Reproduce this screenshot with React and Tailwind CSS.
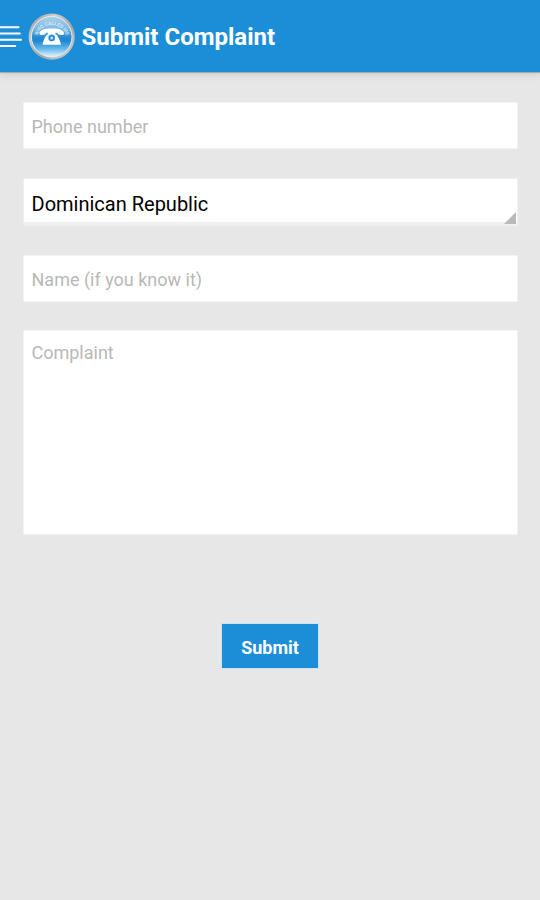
const Header = () => (
  <header className="flex h-[72px] shrink-0 items-center bg-[#1c8ed7] shadow-[0_1px_1px_#a9adb0,0_2px_8px_rgba(90,80,60,0.18)]">
    <svg className="h-[72px] w-[28px] shrink-0" viewBox="0 0 28 72" fill="none" stroke="#fff" strokeWidth="2" strokeLinecap="round">
      <path d="M-2 27.2H18.5M-2 33.5H19.8M-2 39.7H21M-2 45.9H15.2" />
    </svg>
    <svg className="h-[72px] w-[48px] shrink-0" viewBox="28 0 48 72">
      <defs>
        <linearGradient id="rim" x1="0" y1="0" x2="1" y2="1">
          <stop offset="0" stopColor="#858b91" />
          <stop offset=".3" stopColor="#d0cfcd" />
          <stop offset=".6" stopColor="#a0a5a8" />
          <stop offset="1" stopColor="#d9dddd" />
        </linearGradient>
        <linearGradient id="glass" x1="0" y1="0" x2="0" y2="1">
          <stop offset="0" stopColor="#a9cfe9" />
          <stop offset=".3" stopColor="#7ebbe2" />
          <stop offset=".5" stopColor="#2a8dd2" />
          <stop offset=".6" stopColor="#1c88d3" />
          <stop offset=".8" stopColor="#69b9ea" />
          <stop offset="1" stopColor="#e6f7ff" />
        </linearGradient>
        <path id="arc" d="M37.6 35.5A14.8 14.8 0 0 1 66 35.5" />
      </defs>
      <circle cx="51.7" cy="36.7" r="23.1" fill="url(#rim)" />
      <circle cx="51.7" cy="36.7" r="20.3" fill="url(#glass)" stroke="#e5edf1" strokeWidth="1" />
      <text className="font-['Roboto'] text-[5px] font-bold" fill="#e6f4fc" fillOpacity=".75" textLength="38">
        <textPath href="#arc">WHO CALLED ME</textPath>
      </text>
      <path fill="#fff" fillRule="evenodd" d="M39.5 33.5C39.3 30 43.5 28.5 51.7 28.5S64.1 30 63.9 33.5C63.8 34.8 63.2 35 62.2 34.9L58.8 34.4C57.9 34.3 57.6 33.8 57.6 32.8H55.4V34.3C57.4 35.1 58.6 37.4 59.4 39.6L60.7 43.2V44.7H42.7V43.2L44 39.6C44.8 37.4 46 35.1 48 34.3V32.8H45.8C45.8 33.8 45.5 34.3 44.6 34.4L41.2 34.9C40.2 35 39.6 34.8 39.5 33.5ZM51.7 34.6A3.3 3.3 0 1 0 51.7 41.2A3.3 3.3 0 1 0 51.7 34.6Z" />
      <circle cx="51.7" cy="37.9" r="1.5" fill="#b9def4" />
    </svg>
    <h1 className="pl-[5.5px] pt-[2px] text-[24px] font-bold leading-7 text-white">Submit Complaint</h1>
  </header>
);

const field = "w-full rounded-[1px] border border-[#f3f3f3] bg-white pl-[7.5px] text-[18px] text-black outline-none placeholder:text-[#b8b8b8] placeholder:opacity-100";

export default function App() {
  return (
    <div className="flex h-[900px] w-[540px] flex-col overflow-hidden bg-[#e7e7e7] font-['Roboto','Noto_Sans',sans-serif]">
      <Header />
      <main className="flex flex-col items-center pl-[23px] pr-[22px] pt-[30px]">
        <input className={`${field} h-[47px] pt-[2px]`} placeholder="Phone number" />
        <button className="mt-[29px] flex h-[48px] w-full justify-between rounded-[2px] border border-[#f0f0f0] bg-white pl-[7.5px] text-left shadow-[inset_0_-3px_0_#f0f0f0]">
          <span className="pt-[10.5px] text-[20px] leading-7 text-black">Dominican Republic</span>
          <svg className="mr-px mt-[33px] h-[13px] w-[12px]" viewBox="0 0 12 13">
            <path d="M12 0V12H0Z" fill="#b9b9b9" />
          </svg>
        </button>
        <input className={`${field} mt-[29px] h-[47px] pt-[2px]`} placeholder="Name (if you know it)" />
        <textarea className={`${field} mt-[28px] block h-[205px] resize-none pt-[8px] leading-7`} placeholder="Complaint" />
        <button className="mr-px mt-[88px] h-[46px] w-[98px] border border-[#c9e4f5] bg-[#1c8ed7] pt-[2px] text-[18px] font-bold text-white">Submit</button>
      </main>
    </div>
  );
}
